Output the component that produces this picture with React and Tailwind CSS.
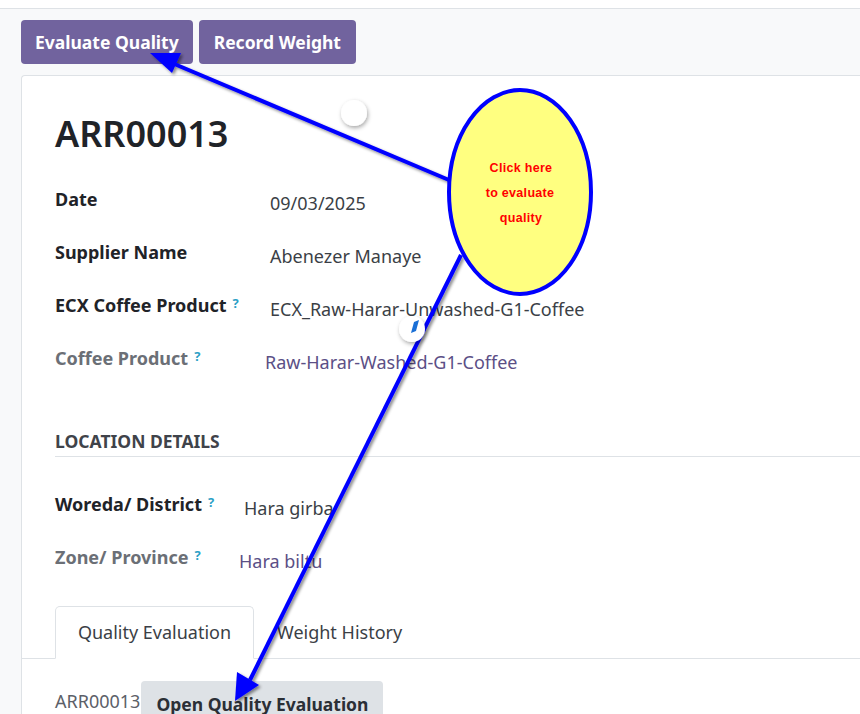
import React from "react";

const Q = () => (
  <sup className="ml-[6px] text-[13px] font-bold text-[#2ba0c6] relative -top-[4px]">?</sup>
);

function Row({ label, value, muted, link, valueClass, q, w = "w-[215px]" }) {
  return (
    <div className="flex items-start h-[53px]">
      <div
        className={
          w +
          " shrink-0 text-[18px] font-bold leading-[24px] " +
          (muted ? "text-[#6b6f76]" : "text-[#1f2328]")
        }
      >
        {label}
        {q && <Q />}
      </div>
      <div
        className={
          "text-[18px] leading-[24px] pt-[4px] " +
          (link ? "text-[#5b4f86] " : "text-[#3b3f46] ") +
          (valueClass || "")
        }
      >
        {value}
      </div>
    </div>
  );
}

export default function App() {
  return (
    <div
      className="relative w-[860px] h-[714px] overflow-hidden bg-white"
      style={{ fontFamily: '"Noto Sans", "Open Sans", sans-serif' }}
    >
      <div className="h-[9px] bg-white border-b border-[#dee2e6]" />
      <div className="bg-[#f8f9fa] pl-[21px] pt-[11px] h-[705px]">
        <div className="flex gap-[6px]">
          <button className="h-[44px] px-[14px] rounded-[4px] bg-[#71639e] text-white font-bold text-[17.5px]">
            Evaluate Quality
          </button>
          <button className="h-[44px] px-[15px] rounded-[4px] bg-[#71639e] text-white font-bold text-[17.5px]">
            Record Weight
          </button>
        </div>
        <div className="mt-[11px] bg-white border-l border-t border-[#dee2e6] rounded-tl-[4px] h-[700px]">
          <div className="pl-[33px] pt-[35px]">
            <h1 className="text-[36px] leading-[46px] font-semibold text-[#1f2328]">ARR00013</h1>
            <div className="mt-[30px]">
              <Row label="Date" value="09/03/2025" />
              <Row label="Supplier Name" value="Abenezer Manaye" />
              <Row label="ECX Coffee Product" value="ECX_Raw-Harar-Unwashed-G1-Coffee" q />
              <Row
                label="Coffee Product"
                value="Raw-Harar-Washed-G1-Coffee"
                muted
                link
                q
                valueClass="-ml-[5px]"
              />
            </div>
            <div className="mt-[30px] border-b border-[#dee2e6] pb-[3px] text-[17.5px] font-bold text-[#3f434a] leading-[24px]">
              LOCATION DETAILS
            </div>
            <div className="mt-[35px]">
              <Row label="Woreda/ District" value="Hara girba" q w="w-[189px]" />
              <Row label="Zone/ Province" value="Hara biltu" muted link q w="w-[184px]" />
            </div>
          </div>
          <div className="mt-[8px] flex border-b border-[#dee2e6] pl-[33px]">
            <div className="-mb-px h-[53px] w-[199px] flex items-center justify-center border border-b-white border-[#dee2e6] rounded-t-[5px] bg-white text-[18px] text-[#3b3f46]">
              Quality Evaluation
            </div>
            <div className="h-[52px] flex items-center pl-[23px] text-[18px] text-[#3b3f46]">
              Weight History
            </div>
          </div>
          <div className="pl-[33px] pt-[22px] flex items-start">
            <span className="text-[18px] text-[#5c6068] pt-[8px] leading-[24px]">ARR00013</span>
            <button className="ml-[1px] h-[40px] px-[15px] rounded-[4px] bg-[#dee2e6] text-[17.5px] font-bold text-[#2b2f36] pt-[6px]">
              Open Quality Evaluation
            </button>
          </div>
        </div>
      </div>

      {/* annotation overlay */}
      <svg
        className="absolute left-0 top-0 pointer-events-none"
        width="860"
        height="714"
        viewBox="0 0 860 714"
      >
        <defs>
          <filter id="sh" x="-20%" y="-20%" width="140%" height="140%">
            <feDropShadow dx="2" dy="2" stdDeviation="1.5" floodColor="#000" floodOpacity="0.45" />
          </filter>
          <filter id="sh2" x="-50%" y="-50%" width="200%" height="200%">
            <feDropShadow dx="1" dy="2" stdDeviation="2" floodColor="#000" floodOpacity="0.35" />
          </filter>
        </defs>
        <g filter="url(#sh)">
          <line x1="449" y1="180" x2="172" y2="63" stroke="#0000ff" strokeWidth="4" />
          <polygon points="150,53 181,53 172,73" fill="#0000ff" />
          <line x1="461" y1="255" x2="250" y2="680" stroke="#0000ff" strokeWidth="4" />
          <polygon points="235,701 237,672 259,685" fill="#0000ff" />
        </g>
        <circle cx="354" cy="113" r="13" fill="#fff" filter="url(#sh2)" />
        <circle cx="412" cy="329" r="13" fill="#fff" filter="url(#sh2)" />
        <path d="M414 322 L419 320 L416 331 L411 333 Z" fill="#1a6fd6" />
        <ellipse
          cx="520"
          cy="192"
          rx="71"
          ry="102"
          fill="#ffff80"
          stroke="#0000ff"
          strokeWidth="4"
        />
        <g
          fill="#ff0000"
          fontFamily="'Liberation Sans', Arial, sans-serif"
          fontWeight="bold"
          fontSize="12.5"
          textAnchor="middle"
          letterSpacing="0.3"
        >
          <text x="521" y="172">Click here</text>
          <text x="520" y="197">to evaluate</text>
          <text x="521" y="222">quality</text>
        </g>
      </svg>
    </div>
  );
}
